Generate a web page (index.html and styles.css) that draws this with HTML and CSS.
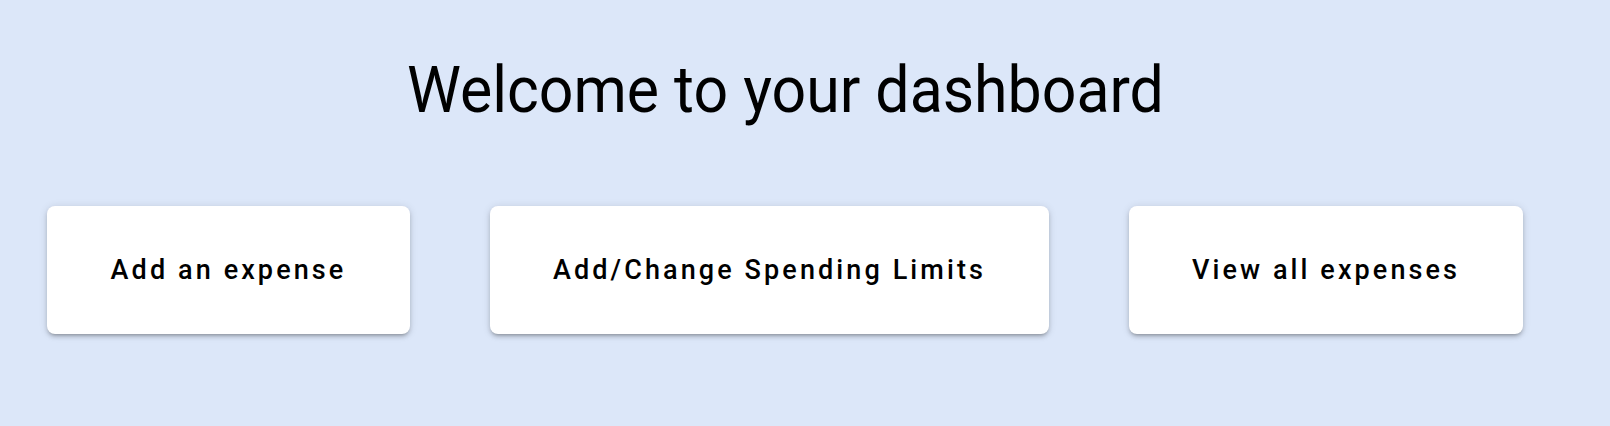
FILE: index.html
```html
<!DOCTYPE html>
<html lang="en">
<head>
<meta charset="utf-8">
<title>Dashboard</title>
<link rel="stylesheet" href="styles.css">
</head>
<body>
<main class="dashboard">
  <h1 class="title">Welcome to your dashboard</h1>
  <div class="actions">
    <button class="action action-add">Add an expense</button>
    <button class="action action-limits">Add/Change Spending Limits</button>
    <button class="action action-view">View all expenses</button>
  </div>
</main>
</body>
</html>
```

FILE: styles.css
```css
html, body {
  margin: 0;
  padding: 0;
  background: #dce7f9;
  height: 100%;
}

body {
  font-family: Roboto, "Noto Sans", sans-serif;
  color: #000;
}

.dashboard {
  width: 1570px;
  display: flex;
  flex-direction: column;
  align-items: center;
}

.title {
  margin: 53px 0 0 0;
  font-size: 64px;
  font-weight: 400;
  line-height: normal;
  letter-spacing: 0;
  transform: scaleX(0.95);
  transform-origin: center;
}

.actions {
  display: flex;
  justify-content: center;
  gap: 80px;
  margin-top: 78px;
}

.action {
  height: 128px;
  padding: 0 60px;
  border: none;
  border-radius: 8px;
  background: #fff;
  color: #000;
  font-family: Roboto, "Noto Sans", sans-serif;
  font-size: 27px;
  font-weight: 500;
  letter-spacing: 3.1px;
  box-shadow: 0px 3px 3px -2px rgba(0,0,0,0.2), 0px 3px 4px 0px rgba(0,0,0,0.14), 0px 1px 8px 0px rgba(0,0,0,0.12);
  cursor: pointer;
}

.action-add { width: 363px; }
.action-limits { width: 559px; }
.action-view { width: 394px; }
```
